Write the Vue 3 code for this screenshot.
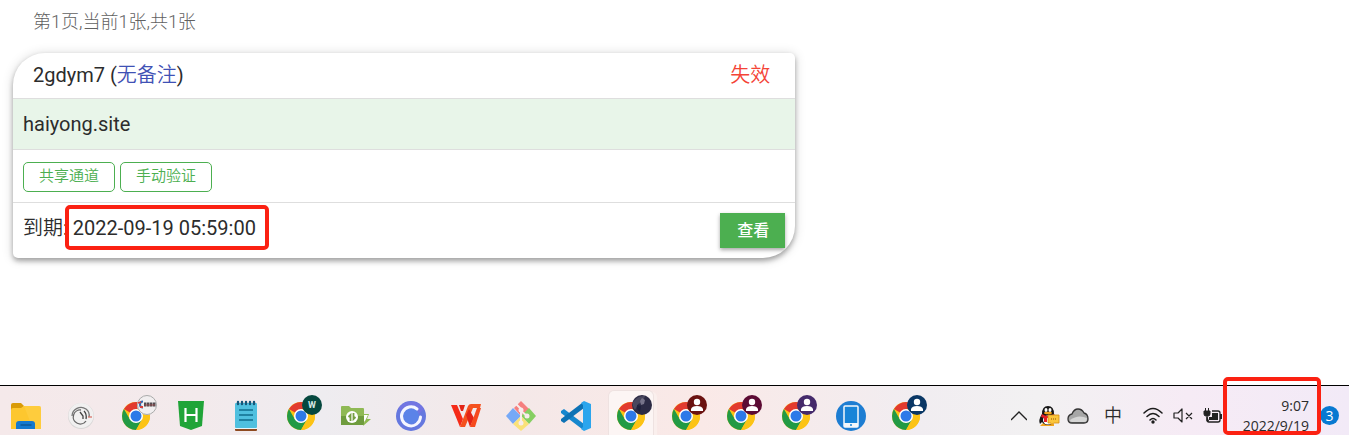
<script setup>
import { ref } from 'vue'

const card = ref({
  id: '2gdym7',
  note: '无备注',
  status: '失效',
  domain: 'haiyong.site',
  expires: '2022-09-19 05:59:00'
})

const apps = [
  { name: 'explorer' },
  { name: 'clock' },
  { name: 'chrome', badge: 'logo', color: '#f1eeef' },
  { name: 'hbuilder' },
  { name: 'notepad' },
  { name: 'chrome', badge: 'letter', color: '#06483f' },
  { name: 'greenfolder' },
  { name: 'ring' },
  { name: 'wps' },
  { name: 'git' },
  { name: 'vscode' },
  { name: 'chrome', badge: 'photo', color: '#2c2b45', active: true },
  { name: 'chrome', badge: 'person', color: '#6b1210' },
  { name: 'chrome', badge: 'person', color: '#5c0b34' },
  { name: 'chrome', badge: 'person', color: '#452a6b' },
  { name: 'phone' },
  { name: 'chrome', badge: 'person', color: '#0a3765' }
]
</script>

<template>
  <div class="screen">
    <main class="page">
      <p class="summary">第1页,当前1张,共1张</p>

      <section class="card">
        <header class="row head">
          <h1>{{ card.id }} (<a href="#">{{ card.note }}</a>)</h1>
          <span class="status">{{ card.status }}</span>
        </header>
        <div class="row domain">{{ card.domain }}</div>
        <div class="row actions">
          <button type="button" class="outline">共享通道</button>
          <button type="button" class="outline">手动验证</button>
        </div>
        <footer class="row foot">
          <div class="expires"><span class="label">到期</span>: <span>{{ card.expires }}</span></div>
          <button type="button" class="view">查看</button>
        </footer>
      </section>
    </main>

    <footer class="taskbar">
      <nav class="apps">
        <button v-for="(app, i) in apps" :key="i" type="button" class="app" :class="{ active: app.active }" :aria-label="app.name">
          <svg viewBox="0 0 44 44" width="44" height="44" aria-hidden="true">
            <g v-if="app.name === 'explorer'">
              <path d="M7 14q0-2 2-2h8l3 3-3 4H7z" fill="#d99b08" />
              <path d="M7 19q0-2 2-2h8l3-2h15q2 0 2 2v21H7z" fill="#fdc72f" />
              <path d="M20 15h15q2 0 2 2v21h-8z" fill="#ffd75a" opacity=".35" />
              <path d="M12 38v-5q0-3 3-3h13q3 0 3 3v5z" fill="#1379cf" />
              <path d="M17 34h10" stroke="#0c5898" stroke-width="1.4" stroke-linecap="round" />
            </g>
            <g v-else-if="app.name === 'clock'">
              <circle cx="22" cy="25" r="13" fill="#d8d7d7" />
              <circle cx="22" cy="24.5" r="12.5" fill="#f1f0f0" />
              <path d="M13 25a9 9 0 0 1 14-7q4 3 3 8" fill="none" stroke="#777" stroke-width="1.3" />
              <path d="M27 30a7 7 0 1 1-5-11" fill="none" stroke="#666" stroke-width="1.3" />
              <path d="M21 21l3 4v3M25 20q3 3 2 8" fill="none" stroke="#444" stroke-width="1.3" />
              <path d="M29 26h4" stroke="#d86b62" stroke-width="1.2" />
            </g>
            <g v-else-if="app.name === 'chrome'">
              <circle cx="22" cy="25" r="14" fill="#fcc315" />
              <path d="M22 25L9.9 18A14 14 0 0 1 34.1 18H22z" fill="#e23a2e" />
              <path d="M9.9 18A14 14 0 0 0 22 39L28 28.5 22 25 16 28.5z" fill="#229a45" />
              <path d="M22 18h12.1A14 14 0 0 1 22 39l6-10.5z" fill="#fcc315" />
              <circle cx="22" cy="25" r="7" fill="#fff" />
              <circle cx="22" cy="25" r="5.5" fill="#2d79e8" />
              <circle cx="33" cy="14" r="10" :fill="app.color" />
              <g v-if="app.badge === 'person'" fill="#fff">
                <circle cx="33" cy="11" r="3.2" />
                <path d="M27 20v-2q1-3 6-3t6 3v2z" />
              </g>
              <text v-else-if="app.badge === 'letter'" x="33" y="17" text-anchor="middle" class="letter">W</text>
              <g v-else-if="app.badge === 'logo'">
                <circle cx="33" cy="14" r="9.5" fill="none" stroke="#aaa" />
                <path d="M29 10.5a3 3 0 1 0 0 6" fill="none" stroke="#3169b2" stroke-width="2" />
                <path d="M24 12l3-1M26 16h3" stroke="#d9403c" stroke-width="1.8" />
                <path d="M30 13.5h12" stroke="#514b51" stroke-width="4" stroke-dasharray="2.5 .5" />
                <path d="M31 14h10" stroke="#a34a49" stroke-width=".8" />
              </g>
              <g v-else>
                <path d="M24 11q5-7 12-6l-2 6-5 2-3 6q-3-4-2-8z" fill="#48475e" />
                <path d="M31 10l2-3 3 2-1 4-3 1z" fill="#77748a" />
                <path d="M28 14l4 1-1 6-3-3z" fill="#1e213c" />
              </g>
            </g>
            <g v-else-if="app.name === 'hbuilder'">
              <path d="M9 10h26l-2 25-11 4-11-4z" fill="#20a438" />
              <path d="M16.5 17v14M27.5 17v14M16 24h12" fill="none" stroke="#fff" stroke-width="2.2" />
            </g>
            <g v-else-if="app.name === 'notepad'">
              <path d="M11 37h22v2q0 1-1 1H12q-1 0-1-1z" fill="#8e4a20" />
              <rect x="11" y="12" width="22" height="25" rx="1" fill="#4fc0df" />
              <path d="M11 37.5h22" stroke="#e8f7fb" />
              <path d="M15 19h14M15 24h14M15 29h14" stroke="#116d8e" stroke-width="1.6" />
              <path d="M14 11v2M18 11v2M22 11v2M26 11v2M30 11v2" stroke="#16577a" stroke-width="2.4" stroke-linecap="round" />
            </g>
            <g v-else-if="app.name === 'greenfolder'">
              <path d="M7 16q0-1 1-1h7l2 2h12q1 0 1 1v16H7z" fill="#8fb955" />
              <path d="M7 25h23v9H7z" fill="#6f9c3e" />
              <circle cx="18" cy="26" r="6" fill="#fff" />
              <path d="M16.5 30v-6l-2 2M19.500 22v6l2-2" fill="none" stroke="#769f43" stroke-width="1.8" />
              <path d="M30 23h5l-2 5h4l-8 7 2-6h-1z" fill="#8eba51" />
              <path d="M30 24h4l-3 6h-1z" fill="#fff" />
            </g>
            <g v-else-if="app.name === 'ring'">
              <circle cx="22" cy="25" r="15" fill="#6578df" />
              <path d="M9 18a15 15 0 0 1 26 0l-8 8z" fill="#7f72e6" opacity=".5" />
              <circle cx="22" cy="25" r="8" fill="#5b83e8" />
              <path d="M28 18a9.500 9.500 0 1 0 3.500 8" fill="none" stroke="#f4f6ff" stroke-width="3" stroke-linecap="round" />
            </g>
            <g v-else-if="app.name === 'wps'">
              <path d="M7 14h6l6 14-3 8z" fill="#f52b18" />
              <path d="M16 36l8-21q1-2 3-2h10l-1 4h-7l-8 19z" fill="#f5511e" />
              <path d="M15 14h6l-2 6h-2zM22 24l3-6 5 9-4 9z" fill="#e32416" />
              <path d="M26 36l7-19h4l-6 19z" fill="#f64a1d" />
            </g>
            <g v-else-if="app.name === 'git'">
              <path d="M22 10l8 8-8 7-7-8z" fill="#f57f7f" />
              <path d="M30 17l7 8-7 8-8-8z" fill="#86cf62" />
              <path d="M14 17l8 8-8 8-7-8z" fill="#76a9f7" />
              <path d="M22 25l8 8-8 7-8-7z" fill="#fae178" />
              <path d="M17 13l5 5v14M22 20l6 5" fill="none" stroke="#f7ecec" stroke-width="2" />
              <circle cx="22" cy="19" r="2.5" fill="#f7ecec" />
              <circle cx="28" cy="25" r="2.5" fill="#f7ecec" />
              <circle cx="22" cy="32" r="2.5" fill="#f7ecec" />
            </g>
            <g v-else-if="app.name === 'vscode'">
              <path d="M7 20l3-2 20 15v6q-1 0-2-1L7 22z" fill="#1687ce" />
              <path d="M7 30l3 2 20-15v-6q-1 0-2 1L7 28z" fill="#0d72b5" />
              <path d="M30 10l7 3v24l-7 3-3-2 2-2V14l-2-2z" fill="#2ba5ed" />
            </g>
            <g v-else>
              <circle cx="22" cy="25" r="15" fill="#1d7dd2" />
              <rect x="15" y="15" width="14" height="21" rx="1" fill="#1784d8" stroke="#f3f7fb" stroke-width="1.5" />
              <path d="M15 32h14v4H15z" fill="#f3f7fb" />
              <path d="M21 34h2" stroke="#1784d8" stroke-width="1.5" />
            </g>
          </svg>
        </button>
      </nav>

      <div class="tray">
        <svg class="chevron" viewBox="0 0 16 20" width="16" height="20" aria-hidden="true"><path d="M0 14l8-8 8 8" fill="none" stroke="#222" stroke-width="1.3" /></svg>
        <svg class="qq" viewBox="0 0 22 20" width="22" height="20" aria-hidden="true">
          <path d="M3 19q1-2 4-2h4v3H2zM10 18h6v2h-6z" fill="#f4a51b" />
          <path d="M4 8q0-8 6-8t6 8q4 6 2 9l-2-1q-2 3-6 3t-6-3l-2 2q-2-4 2-10z" fill="#161616" />
          <ellipse cx="10" cy="14" rx="5" ry="4.5" fill="#fff" />
          <ellipse cx="8" cy="4" rx="1.5" ry="2" fill="#fff" />
          <ellipse cx="12" cy="4" rx="1.5" ry="2" fill="#fff" />
          <ellipse cx="10" cy="7" rx="4" ry="1.3" fill="#f5a51b" />
          <path d="M4 8q6 4 12 0v3q-3 2-7 1v4H6v-4l-3-1z" fill="#e52027" />
          <path d="M10 9h11v8h-5l-3 2v-2h-3z" fill="#fbc53b" stroke="#d58e12" stroke-width=".8" />
          <path d="M13 13h6" stroke="#8e5209" stroke-width="1.2" stroke-dasharray="1 1" />
        </svg>
        <svg class="cloud" viewBox="0 0 22 20" width="22" height="20" aria-hidden="true"><path d="M5 17q-4 0-4-4t4-5q2-5 6-5t6 4q4 1 4 6 0 4-4 4z" fill="#a7a7a7" stroke="#333" stroke-width="1.3" /><path d="M3 14q8-6 17-2 0 4-3 4H5q-2 0-2-2z" fill="#d5d5d5" /></svg>
        <span class="ime">中</span>
        <svg class="wifi" viewBox="0 0 20 20" width="20" height="20" aria-hidden="true"><path d="M1 7q9-9 18 0M4 10.5q6-6 12 0M7 14q3-3 6 0" fill="none" stroke="#1c1c1c" stroke-width="1.5" stroke-linecap="round" /><circle cx="10" cy="16" r="1.7" fill="#1c1c1c" /></svg>
        <svg class="sound" viewBox="0 0 20 20" width="20" height="20" aria-hidden="true"><path d="M1 7h4l4-4v13l-4-4H1zM13 7l6 6M19 7l-6 6" fill="none" stroke="#222" stroke-width="1.2" stroke-linejoin="round" /></svg>
        <svg class="battery" viewBox="0 0 20 20" width="20" height="20" aria-hidden="true"><path d="M2.5 2v4M5.5 2v4M1 5h6v3q0 2-2 2H3Q1 10 1 8zM4 10v5h2" fill="#222" stroke="#222" /><path d="M9 5h6q2 0 2 2v7q0 2-2 2H6q-2 0-2-2v-3" fill="none" stroke="#222" stroke-width="1.3" /><path d="M9 7h6v7H6v-3h3zM17 8h2v5h-2z" fill="#222" /></svg>
        <div class="time"><span>9:07</span><span>2022/9/19</span></div>
        <span class="count">3</span>
      </div>
    </footer>
  </div>
</template>

<style>
body {
  margin: 0;
}
</style>

<style scoped>
.screen {
  display: flex;
  flex-direction: column;
  min-height: 100vh;
  background: #fff;
  color: #2c2c2c;
  font-family: Roboto, "Noto Sans CJK SC", sans-serif;
}

.page {
  flex: 1;
  padding: 8px 10px 0 13px;
}

.summary {
  margin: 0 20px 17px;
  color: #616161;
  font-size: 18px;
  font-weight: 300;
  line-height: 28px;
}

.card {
  width: 59%;
  border-radius: 32px 5px 32px 5px;
  background: #fff;
  box-shadow: 0 3px 5px rgba(0, 0, 0, .3), 0 1px 12px rgba(0, 0, 0, .16);
  font-size: 20px;
  overflow: hidden;
}

.row {
  display: flex;
  align-items: center;
  padding: 10px;
  border-bottom: 1px solid #dedede;
  line-height: 30px;
}

.head {
  justify-content: space-between;
  padding: 7px 25px 8px 20px;
}

h1 {
  margin: 0;
  font-size: 20px;
  font-weight: 400;
}

a {
  color: #3f51b5;
  text-decoration: none;
}

a,
.label,
.status {
  font-weight: 350;
}

.status {
  color: #f44336;
}

.domain {
  background: #e8f5e9;
}

.actions {
  gap: 5px;
  padding: 12px 10px 10px;
}

button {
  font-family: inherit;
}

.outline {
  height: 30px;
  padding: 0 15px 5px;
  border: 1px solid #4caf50;
  border-radius: 5px;
  background: #fff;
  color: #4caf50;
  font-size: 15px;
  font-weight: 350;
}

.foot {
  align-items: flex-start;
  justify-content: space-between;
  border-bottom: 0;
}

/* marker frame drawn over the neighbouring text */
.expires {
  position: relative;
}

.expires::after {
  position: absolute;
  inset: -8px -13px -7px 42px;
  border: 4px solid #fb2112;
  border-radius: 5px;
  content: "";
}

.view {
  height: 35px;
  padding: 0 16px 3px 17px;
  border: 0;
  background: #4caf50;
  box-shadow: 0 2px 4px rgba(0, 0, 0, .35);
  color: #fff;
  font-size: 16px;
  font-weight: 500;
}

.taskbar {
  display: flex;
  justify-content: space-between;
  height: 49px;
  border-top: 1px solid #000;
  background: linear-gradient(90deg, #f5e9ea, #f3eaec 15%, #eeecf0 24%, #f4e8e8 38%, #fae9e7 52%, #f1edf1 68%, #f2f1f2 77%, #f6ebf5 88%, #f2eaf7);
}

.apps {
  display: flex;
  gap: 11px;
  padding: 5px 0 0 4px;
}

.app {
  width: 44px;
  height: 44px;
  padding: 0;
  border: 0;
  background: none;
}

.app svg {
  display: block;
}

.app.active {
  border-radius: 5px 5px 0 0;
  background: #fcf5f4;
  box-shadow: 0 0 0 1px #eee2e1, 4px 1px 0 #faefed;
}

.letter {
  fill: #d8e8e4;
  font-size: 9px;
  font-weight: 700;
}

.tray {
  display: flex;
  align-items: center;
  padding: 10px 10px 0 0;
}

.tray svg {
  flex: none;
}

.chevron {
  margin-right: 11px;
}

.qq {
  margin-right: 7px;
}

.cloud {
  margin-right: 15px;
}

.ime {
  margin-right: 21px;
  font-size: 18px;
  font-weight: 350;
  line-height: 20px;
}

.wifi,
.sound {
  margin-right: 10px;
}

/* the date runs under the bottom edge of the bar */
.time {
  position: relative;
  display: flex;
  flex-direction: column;
  align-items: flex-end;
  align-self: flex-start;
  width: 86px;
  padding-right: 11px;
  font-family: "Open Sans", sans-serif;
  font-size: 14px;
  line-height: 20px;
}

.time::after {
  position: absolute;
  inset: -19px -1px 1px 0;
  border: 4px solid #fb2112;
  border-radius: 5px;
  content: "";
}

.count {
  width: 19px;
  height: 19px;
  border-radius: 50%;
  background: #0879d1;
  color: #fff;
  font-family: "Open Sans", sans-serif;
  font-size: 14px;
  line-height: 19px;
  text-align: center;
}
</style>
